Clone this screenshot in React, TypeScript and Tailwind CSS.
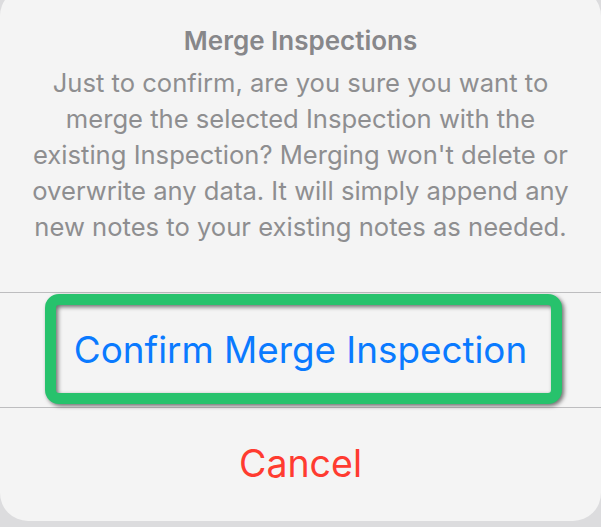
export default function App() {
  return (
    <div className="h-[527px] w-[601px] overflow-hidden bg-[#dcdcde] font-['Inter','Liberation_Sans',sans-serif]">
      <div className="-mt-3 flex h-[533px] flex-col rounded-[28px] bg-[#f4f4f4]">
        {/* Header */}
        <div className="flex h-[304px] flex-col items-center pt-[37px] text-center">
          <h2 className="text-[26px] font-semibold leading-[32px] text-[#87878a]">Merge Inspections</h2>
          <p className="mt-2 px-4 text-[25.6px] leading-[36px] text-[#8e8e90]">
            Just to confirm, are you sure you want to
            <br />
            merge the selected Inspection with the
            <br />
            existing Inspection? Merging won't delete or
            <br />
            overwrite any data. It will simply append any
            <br />
            new notes to your existing notes as needed.
          </p>
        </div>

        <div className="h-px bg-[#bdbdbf]" />

        {/* Confirm action */}
        <div className="relative flex h-[114px] items-center justify-center">
          <span className="text-[36.8px] text-[#0a7aff]">Confirm Merge Inspection</span>
          <div className="pointer-events-none absolute left-[45px] top-[1px] h-[110px] w-[517px] rounded-[14px] border-[11px] border-[#27c26c] drop-shadow-[2px_2px_2px_rgba(0,0,0,0.55)]" />
        </div>

        <div className="h-px bg-[#bdbdbf]" />

        {/* Cancel */}
        <div className="flex h-[113px] items-center justify-center">
          <span className="text-[37.5px] text-[#ff3b30]">Cancel</span>
        </div>
      </div>
    </div>
  )
}
